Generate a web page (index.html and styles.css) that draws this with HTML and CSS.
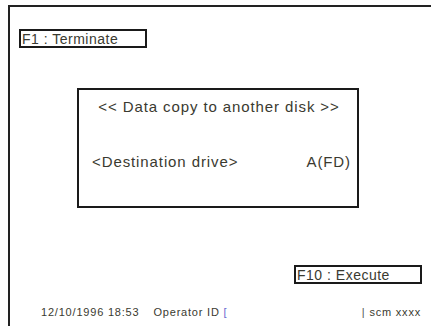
FILE: index.html
```html
<!DOCTYPE html>
<html>
<head>
<meta charset="utf-8">
<link rel="stylesheet" href="styles.css">
</head>
<body>
<div class="frame">
  <div class="fkey fkey-f1">F1 : Terminate</div>
  <div class="dialog">
    <div class="title">&lt;&lt; Data copy to another disk &gt;&gt;</div>
    <div class="row">
      <span>&lt;Destination drive&gt;</span>
      <span>A(FD)</span>
    </div>
  </div>
  <div class="actions">
    <div class="fkey fkey-f10">F10 : Execute</div>
  </div>
  <div class="status">
    <span class="stamp"><span class="date">12/10/1996 18:53</span><span class="op">Operator ID <span class="cursor">[</span></span></span>
    <span class="sys"><span class="bar">|</span>scm xxxx</span>
  </div>
</div>
</body>
</html>
```

FILE: styles.css
```css
html, body {
  margin: 0;
  padding: 0;
  background: #fff;
  width: 431px;
  height: 326px;
  overflow: hidden;
}
body {
  font-family: "Liberation Sans", Arial, sans-serif;
  color: #3a3a30;
}
.frame {
  margin: 5px 0 0 8px;
  height: 321px;
  border-top: 2px solid #222;
  border-left: 2px solid #222;
  box-sizing: border-box;
  display: flex;
  flex-direction: column;
}
.fkey {
  border: 2px solid #1a1a1a;
  box-sizing: border-box;
  height: 19px;
  font-size: 14px;
  letter-spacing: 0.5px;
  line-height: 16px;
  padding-left: 1px;
  white-space: nowrap;
}
.fkey-f1 {
  margin: 22px 0 0 9px;
  width: 128px;
}
.dialog {
  margin: 40px 0 0 67px;
  width: 282px;
  height: 120px;
  border: 2px solid #1a1a1a;
  box-sizing: border-box;
  font-size: 15px;
  letter-spacing: 0.9px;
  white-space: nowrap;
}
.title {
  text-align: center;
  margin-top: 8px;
  padding-left: 2px;
}
.row {
  display: flex;
  justify-content: space-between;
  margin: 38px 6px 0 13px;
}
.actions {
  display: flex;
  justify-content: flex-end;
  margin-top: 57px;
  padding-right: 9px;
}
.fkey-f10 {
  width: 128px;
}
.status {
  display: flex;
  justify-content: space-between;
  font-size: 11px;
  letter-spacing: 0.8px;
  margin: 22px 10px 0 31px;
  white-space: nowrap;
}
.date {
  margin-right: 14px;
}
.cursor {
  color: #6a6ad0;
}
.bar {
  color: #555;
  margin-right: 4px;
}
```
